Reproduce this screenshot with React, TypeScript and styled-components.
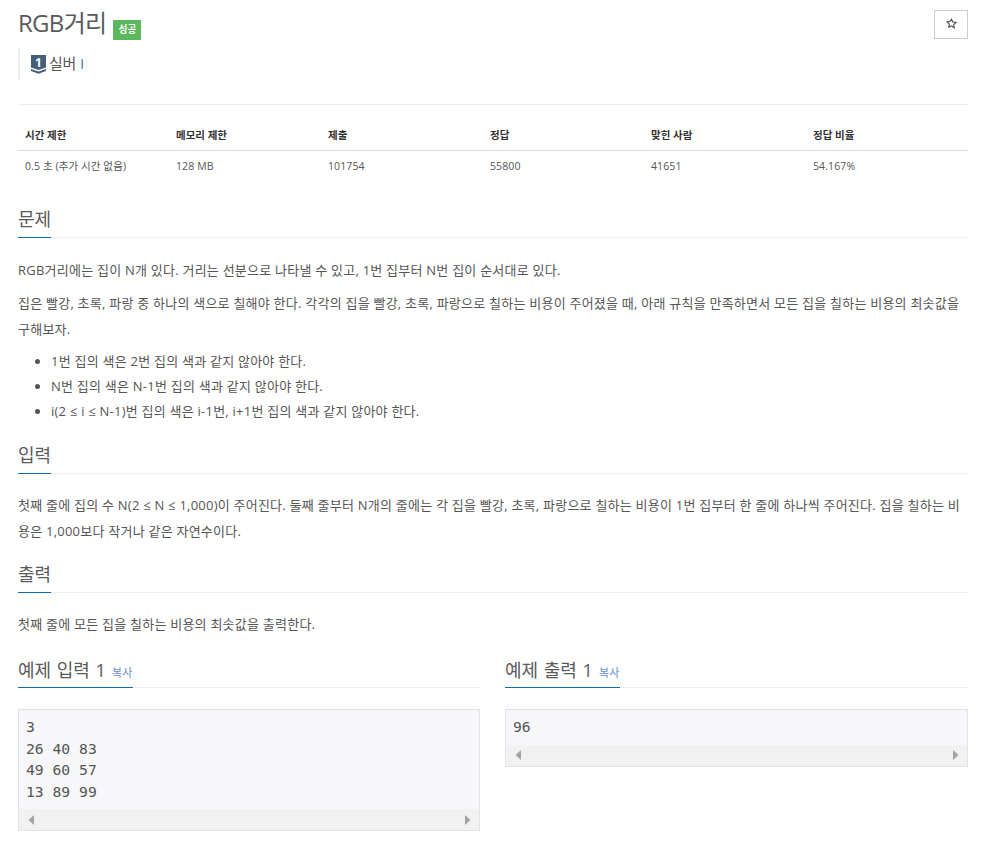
import React from "react";
import styled, { createGlobalStyle } from "styled-components";

const Global = createGlobalStyle`
  html, body { margin: 0; padding: 0; background: #fff; }
  body { font-family: "Open Sans", "Noto Sans CJK KR", sans-serif; color: #555; font-size: 13px; }
`;

const Page = styled.div`
  width: 950px;
  margin-left: 18px;
  height: 843px;
  overflow: hidden;
`;
const TitleRow = styled.div`
  display: flex;
  justify-content: space-between;
  align-items: flex-start;
  height: 48px;
  padding-top: 8px;
  box-sizing: border-box;
`;
const Title = styled.h1`
  display: flex;
  align-items: flex-start;
  margin: 0;
  font-size: 24px;
  line-height: 30px;
  font-weight: 400;
  color: #5a5a5a;
  letter-spacing: -0.7px;
`;
const Badge = styled.span`
  margin: 12px 0 0 7px;
  width: 28px;
  height: 20px;
  background: #5cb85c;
  color: #fff;
  font-size: 9.75px;
  font-weight: 700;
  line-height: 20px;
  text-align: center;
  letter-spacing: 0;
`;
const StarButton = styled.button`
  display: flex;
  align-items: center;
  justify-content: center;
  margin-top: 2px;
  width: 34px;
  height: 29px;
  background: #fff;
  border: 1px solid #ccc;
  padding: 0 0 2px;
`;
const Tier = styled.div`
  display: flex;
  align-items: center;
  gap: 3px;
  height: 32px;
  border-left: 2px solid #eee;
  padding-left: 11px;
  font-size: 15px;
  color: #555;
`;
const TierText = styled.span`
  margin-bottom: 4px;
  letter-spacing: -0.2px;
`;
const TierLink = styled.span`
  color: #2a7fb8;
`;
const Rule = styled.hr`
  margin: 24px 0 0;
  border: 0;
  border-top: 1px solid #eee;
`;
const StatTable = styled.div`
  margin-top: 20px;
  display: grid;
  grid-template-columns: 151px 152px 162px 161px 162px 162px;
  font-size: 10.5px;
`;
const HeadCell = styled.div`
  padding: 0 7px;
  height: 25px;
  line-height: 20px;
  font-weight: 700;
  color: #333;
  border-bottom: 1px solid #ddd;
`;
const BodyCell = styled.div`
  padding: 0 7px;
  height: 31px;
  line-height: 31px;
  color: #555;
  letter-spacing: 0.1px;
`;
const Heading = styled.div<{ $top?: number }>`
  margin-top: ${(p) => p.$top ?? 0}px;
  display: flex;
  border-bottom: 1px dotted #e0e0e0;
  height: 30px;
`;
const SampleHeading = styled(Heading)`
  height: 29px;
`;
const HeadingText = styled.h3`
  margin: 0;
  height: 100%;
  border-bottom: 1px solid #0f6cb0;
  font-size: 18px;
  line-height: 24px;
  font-weight: 400;
  color: #5a5a5a;
  white-space: nowrap;
  box-sizing: content-box;
`;
const SampleTitle = styled(HeadingText)`
  word-spacing: 1px;
`;
const Copy = styled.span`
  margin-left: 6px;
  font-size: 11px;
  letter-spacing: 0.2px;
  color: #6c8cce;
  word-spacing: 0;
`;
const Para = styled.p<{ $top?: number }>`
  margin: ${(p) => p.$top ?? 0}px 0 0;
  font-size: 13px;
  line-height: 26px;
  letter-spacing: 0.235px;
  color: #555;
`;
const List = styled.ul`
  margin: 7px 0 0;
  padding-left: 33px;
  font-size: 13px;
  line-height: 25px;
  letter-spacing: 0.235px;
  color: #555;
`;
const Samples = styled.div`
  margin-top: 21px;
  display: grid;
  grid-template-columns: 462px 463px;
  column-gap: 25px;
  align-items: start;
`;
const SampleBox = styled.div`
  margin-top: 21px;
  border: 1px solid #e1e1e8;
  background: #f7f7f9;
`;
const Code = styled.pre`
  margin: 0;
  padding: 6px 7px 7px;
  font-family: "DejaVu Sans Mono", monospace;
  font-size: 14.7px;
  line-height: 21.5px;
  color: #555;
`;
const Scrollbar = styled.div`
  height: 21px;
  background: #f1f1f1;
  display: flex;
  justify-content: space-between;
  align-items: center;
  padding: 0 8px 0 9px;
`;

const Arrow = ({ right }: { right?: boolean }) => (
  <svg width="6" height="10" viewBox="0 0 6 10">
    <path d={right ? "M0 0L5.5 5L0 10Z" : "M6 0L0.5 5L6 10Z"} fill="#a3a3a3" />
  </svg>
);

const StarIcon = () => (
  <svg width="11" height="11" viewBox="0 0 24 24">
    <path
      d="M12 2.5l2.9 6.4 6.9.8-5.1 4.7 1.4 6.9L12 17l-6.1 3.3 1.4-6.9-5.1-4.7 6.9-.8z"
      fill="none"
      stroke="#444"
      strokeWidth="2.2"
      strokeLinejoin="miter"
    />
  </svg>
);

const TierIcon = () => (
  <svg width="15" height="19" viewBox="0 0 15 19" style={{ display: "block" }}>
    <path d="M0 0H15V12.5L7.5 15L0 12.5Z" fill="#435f7a" />
    <path d="M0 14L7.5 16.6L15 14V16L7.5 18.8L0 16Z" fill="#435f7a" />
    <text x="7.5" y="12" textAnchor="middle" fontSize="12" fontWeight="700" fill="#fff" fontFamily="Open Sans">1</text>
  </svg>
);

const stats = [
  ["시간 제한", "0.5 초 (추가 시간 없음)"],
  ["메모리 제한", "128 MB"],
  ["제출", "101754"],
  ["정답", "55800"],
  ["맞힌 사람", "41651"],
  ["정답 비율", "54.167%"],
];

const Sample = ({ title, code }: { title: string; code: string }) => (
  <div>
    <SampleHeading>
      <SampleTitle>
        {title}
        <Copy>복사</Copy>
      </SampleTitle>
    </SampleHeading>
    <SampleBox>
      <Code>{code}</Code>
      <Scrollbar>
        <Arrow />
        <Arrow right />
      </Scrollbar>
    </SampleBox>
  </div>
);

export default function App() {
  return (
    <Page>
      <Global />
      <TitleRow>
        <Title>
          RGB거리
          <Badge>성공</Badge>
        </Title>
        <StarButton aria-label="star">
          <StarIcon />
        </StarButton>
      </TitleRow>
      <Tier>
        <TierIcon />
        <TierText>
          실버 <TierLink>I</TierLink>
        </TierText>
      </Tier>
      <Rule />
      <StatTable>
        {stats.map((s) => (
          <HeadCell key={s[0]}>{s[0]}</HeadCell>
        ))}
        {stats.map((s) => (
          <BodyCell key={s[0]}>{s[1]}</BodyCell>
        ))}
      </StatTable>
      <Heading $top={25}>
        <HeadingText>문제</HeadingText>
      </Heading>
      <Para $top={19}>RGB거리에는 집이 N개 있다. 거리는 선분으로 나타낼 수 있고, 1번 집부터 N번 집이 순서대로 있다.</Para>
      <Para $top={7}>
        집은 빨강, 초록, 파랑 중 하나의 색으로 칠해야 한다. 각각의 집을 빨강, 초록, 파랑으로 칠하는 비용이 주어졌을 때, 아래 규칙을 만족하면서 모든 집을 칠하는 비용의 최솟값을 구해보자.
      </Para>
      <List>
        <li>1번 집의 색은 2번 집의 색과 같지 않아야 한다.</li>
        <li>N번 집의 색은 N-1번 집의 색과 같지 않아야 한다.</li>
        <li>i(2 ≤ i ≤ N-1)번 집의 색은 i-1번, i+1번 집의 색과 같지 않아야 한다.</li>
      </List>
      <Heading $top={19}>
        <HeadingText>입력</HeadingText>
      </Heading>
      <Para $top={18}>
        첫째 줄에 집의 수 N(2 ≤ N ≤ 1,000)이 주어진다. 둘째 줄부터 N개의 줄에는 각 집을 빨강, 초록, 파랑으로 칠하는 비용이 1번 집부터 한 줄에 하나씩 주어진다. 집을 칠하는 비용은 1,000보다 작거나 같은 자연수이다.
      </Para>
      <Heading $top={18}>
        <HeadingText>출력</HeadingText>
      </Heading>
      <Para $top={18}>첫째 줄에 모든 집을 칠하는 비용의 최솟값을 출력한다.</Para>
      <Samples>
        <Sample title="예제 입력 1" code={"3\n26 40 83\n49 60 57\n13 89 99"} />
        <Sample title="예제 출력 1" code={"96"} />
      </Samples>
    </Page>
  );
}
